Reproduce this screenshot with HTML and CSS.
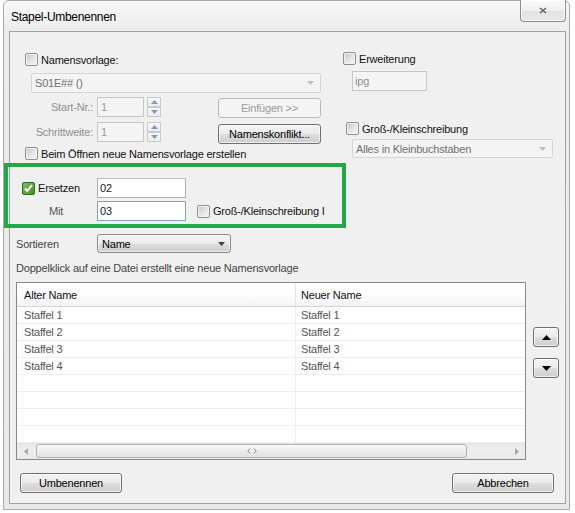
FILE: index.html
```html
<!DOCTYPE html>
<html lang="de">
<head>
<meta charset="utf-8">
<title>Stapel-Umbenennen</title>
<link rel="stylesheet" href="styles.css">
</head>
<body>
<div class="window">
  <div class="titlebar">
    <span class="title">Stapel-Umbenennen</span>
    <div class="close"><svg width="8" height="7" viewBox="0 0 8 7"><path d="M1 1l6 5M7 1L1 6" stroke="#5d5d5d" stroke-width="1.4" fill="none"/></svg></div>
  </div>
  <div class="client">
    <div class="top">
      <div class="left">
        <div class="chk"><span class="box"></span><span>Namensvorlage:</span></div>
        <div class="combo dis nv-combo"><span>S01E## ()</span><svg class="arr" width="7" height="4" viewBox="0 0 7 4"><path d="M0 0h7L3.5 4z" fill="#bdbdbd"/></svg></div>
        <div class="mid">
          <div class="fields">
            <div class="frow">
              <span class="flabel">Start-Nr.:</span>
              <div class="num">1</div>
              <div class="spin"><span><svg width="7" height="4" viewBox="0 0 7 4"><path d="M0 4h7L3.5 0z" fill="#7f97c9"/></svg></span><span><svg width="7" height="4" viewBox="0 0 7 4"><path d="M0 0h7L3.5 4z" fill="#7f97c9"/></svg></span></div>
            </div>
            <div class="frow">
              <span class="flabel">Schrittweite:</span>
              <div class="num">1</div>
              <div class="spin"><span><svg width="7" height="4" viewBox="0 0 7 4"><path d="M0 4h7L3.5 0z" fill="#7f97c9"/></svg></span><span><svg width="7" height="4" viewBox="0 0 7 4"><path d="M0 0h7L3.5 4z" fill="#7f97c9"/></svg></span></div>
            </div>
          </div>
          <div class="btns">
            <div class="btn dis">Einfügen &gt;&gt;</div>
            <div class="btn">Namenskonflikt...</div>
          </div>
        </div>
        <div class="chk open-cb"><span class="box"></span><span>Beim Öffnen neue Namensvorlage erstellen</span></div>
      </div>
      <div class="right">
        <div class="chk ext"><span class="box"></span><span>Erweiterung</span></div>
        <div class="ipg">ipg</div>
        <div class="chk case-cb"><span class="box"></span><span>Groß-/Kleinschreibung</span></div>
        <div class="combo dis case-combo"><span>Alles in Kleinbuchstaben</span><svg class="arr" width="7" height="4" viewBox="0 0 7 4"><path d="M0 0h7L3.5 4z" fill="#bdbdbd"/></svg></div>
      </div>
    </div>

    <div class="replace">
      <div class="chk rep-cb"><svg class="checked" width="13" height="13" viewBox="0 0 13 13"><defs><linearGradient id="g" x1="0" y1="0" x2="1" y2="1"><stop offset="0" stop-color="#7fc45a"/><stop offset="1" stop-color="#3d8f26"/></linearGradient></defs><rect x="0.5" y="0.5" width="12" height="12" rx="1.5" fill="url(#g)" stroke="#2f6f22"/><path d="M3 6.5l2.3 2.5L10 3.2" stroke="#fff" stroke-width="2" fill="none"/></svg><span>Ersetzen</span></div>
      <div class="txt">02</div>
      <div></div>
      <div class="mit">Mit</div>
      <div class="txt focus">03</div>
      <div class="chk case2"><span class="box"></span><span>Groß-/Kleinschreibung I</span></div>
    </div>

    <div class="sort-row">
      <span class="lbl">Sortieren</span>
      <div class="combo name-combo"><span>Name</span><svg class="arr" width="7" height="4" viewBox="0 0 7 4"><path d="M0 0h7L3.5 4z" fill="#404040"/></svg></div>
    </div>

    <div class="hint">Doppelklick auf eine Datei erstellt eine neue Namensvorlage</div>

    <div class="list-area">
      <div class="list">
        <div class="lhead"><div>Alter Name</div><div>Neuer Name</div></div>
        <div class="lrows">
          <div class="lrow"><div>Staffel 1</div><div>Staffel 1</div></div>
          <div class="lrow"><div>Staffel 2</div><div>Staffel 2</div></div>
          <div class="lrow"><div>Staffel 3</div><div>Staffel 3</div></div>
          <div class="lrow"><div>Staffel 4</div><div>Staffel 4</div></div>
          <div class="lrow"><div></div><div></div></div>
          <div class="lrow"><div></div><div></div></div>
          <div class="lrow"><div></div><div></div></div>
          <div class="lrow"><div></div><div></div></div>
        </div>
        <div class="hscroll">
          <div class="sarrow"><svg width="4" height="7" viewBox="0 0 4 7"><path d="M4 0v7L0 3.5z" fill="#a8a8a8"/></svg></div>
          <div class="thumb"><svg width="10" height="6" viewBox="0 0 10 6"><path d="M3 0.5L0.8 3L3 5.5M7 0.5L9.2 3L7 5.5" stroke="#7a7a7a" stroke-width="0.9" fill="none"/></svg></div>
          <div class="sfill"></div>
          <div class="sarrow"><svg width="4" height="7" viewBox="0 0 4 7"><path d="M0 0v7L4 3.5z" fill="#a8a8a8"/></svg></div>
        </div>
      </div>
      <div class="movers">
        <div class="btn mv up"><svg width="9" height="5" viewBox="0 0 9 5"><path d="M0 5h9L4.5 0z" fill="#000"/></svg></div>
        <div class="btn mv down"><svg width="9" height="5" viewBox="0 0 9 5"><path d="M0 0h9L4.5 5z" fill="#000"/></svg></div>
      </div>
    </div>

    <div class="footer">
      <div class="btn fbtn">Umbenennen</div>
      <div class="btn fbtn">Abbrechen</div>
    </div>
  </div>
</div>
<div class="highlight"></div>
</body>
</html>
```
FILE: styles.css
```css
* { box-sizing: border-box; }
body {
  margin: 0;
  background: #ffffff;
  font-family: "Liberation Sans", Arial, sans-serif;
  font-size: 11px;
  letter-spacing: -0.2px;
  color: #1a1a1a;
}
.window {
  margin-left: 3px;
  width: 567px;
  height: 510px;
  border: 1px solid #a9a9a9;
  border-radius: 6px 6px 0 0;
  background: linear-gradient(#f8f8f8, #ececec 30px, #e9e9e9);
}
.titlebar {
  height: 30px;
  display: flex;
  align-items: flex-start;
}
.title {
  padding: 9px 0 0 7px;
  font-size: 12px;
  line-height: 14px;
  letter-spacing: -0.3px;
  color: #000;
}
.close {
  margin-left: auto;
  margin-right: 3px;
  margin-top: -1px;
  width: 46px;
  height: 22px;
  border: 1px solid #8e8e8e;
  border-top: none;
  border-radius: 0 0 4px 4px;
  background: linear-gradient(#fbfbfb, #efefef 50%, #e2e2e2 51%, #e8e8e8);
  box-shadow: inset 0 0 0 1px rgba(255,255,255,0.7);
  display: flex;
  align-items: center;
  justify-content: center;
}
.client {
  margin: 0 3px 0 5px;
  height: 473px;
  border: 1px solid #a3a3a3;
  background: #f0f0f0;
}
.top { display: flex; height: 128px; }
.left { width: 330px; padding: 21px 0 0 15px; }
.right { padding-top: 20px; }

.chk {
  display: flex;
  align-items: center;
  height: 13px;
  gap: 3px;
  white-space: nowrap;
  color: #111;
}
.box {
  width: 13px;
  height: 13px;
  flex: none;
  border: 1px solid #8e8f8f;
  border-radius: 2px;
  background: linear-gradient(135deg, #c4c4c4 0%, #e6e6e6 55%, #f6f6f6 100%);
  box-shadow: inset 0 0 0 1px #f3f3f3;
}
.checked { flex: none; }

.combo {
  display: flex;
  align-items: center;
  justify-content: space-between;
  border: 1px solid #d5d5d5;
  border-radius: 2px;
  padding: 0 6px 0 3px;
  white-space: nowrap;
}
.combo.dis { background: #f4f4f4; color: #6f6f6f; }
.nv-combo { margin: 7px 0 0 6px; width: 290px; height: 20px; }

.mid { display: flex; margin-top: 4px; }
.frow { display: flex; align-items: center; height: 20px; }
.frow + .frow { margin-top: 5px; }
.flabel {
  width: 68px;
  margin-right: 4px;
  text-align: right;
  color: #8f8f8f;
}
.num {
  width: 47px;
  height: 20px;
  border: 1px solid #c6c6c6;
  background: #f4f4f4;
  color: #9a9a9a;
  padding-left: 3px;
  line-height: 18px;
}
.spin {
  margin-left: 3px;
  width: 14px;
  height: 20px;
  display: flex;
  flex-direction: column;
}
.spin span {
  flex: 1;
  border: 1px solid #cacaca;
  background: linear-gradient(#f8f8f8, #ececec);
  display: flex;
  align-items: center;
  justify-content: center;
}
.btns {
  margin-left: 57px;
  padding-top: 1px;
  display: flex;
  flex-direction: column;
  gap: 6px;
}
.btn {
  width: 103px;
  height: 20px;
  border: 1px solid #707070;
  border-radius: 3px;
  background: linear-gradient(#f3f3f3 0%, #ebebeb 50%, #dddddd 51%, #cfcfcf 100%);
  box-shadow: inset 0 0 0 1px rgba(255,255,255,0.65);
  color: #000;
  display: flex;
  align-items: center;
  justify-content: center;
  white-space: nowrap;
}
.btn.dis {
  border-color: #b9b9b9;
  background: #f4f4f4;
  color: #9b9b9b;
  box-shadow: none;
}
.open-cb { margin-top: 3px; }

.ext { margin-left: 3px; }
.ipg {
  margin: 6px 0 0 12px;
  width: 75px;
  height: 20px;
  border: 1px solid #c6c6c6;
  background: #f4f4f4;
  color: #8d8d8d;
  padding-left: 2px;
  line-height: 18px;
}
.case-cb { margin: 31px 0 0 6px; }
.case-combo { margin: 4px 0 0 12px; width: 201px; height: 19px; }

.replace {
  height: 61px;
  padding-top: 18px;
  display: grid;
  grid-template-columns: 87px 89px auto;
  grid-template-rows: 20px 20px;
  row-gap: 3px;
  align-items: center;
}
.rep-cb { padding-left: 12px; }
.mit { padding-left: 39px; color: #555; }
.txt {
  width: 89px;
  height: 20px;
  border: 1px solid #abadb3;
  border-top-color: #b9bcc2;
  background: #fff;
  padding-left: 2px;
  line-height: 18px;
  color: #222;
}
.txt.focus { border-color: #7da2ce; }
.case2 { margin-left: 11px; }

.sort-row {
  display: flex;
  align-items: center;
  margin-top: 13px;
  height: 19px;
}
.sort-row .lbl { width: 87px; padding-left: 6px; color: #444; }
.name-combo {
  width: 134px;
  height: 19px;
  border-color: #8a8a8a;
  border-radius: 3px;
  background: linear-gradient(#f3f3f3 0%, #ebebeb 50%, #dddddd 51%, #cfcfcf 100%);
  box-shadow: inset 0 0 0 1px rgba(255,255,255,0.6);
  color: #000;
  padding: 0 5px 0 4px;
}
.hint {
  margin-top: 8px;
  padding-left: 6px;
  line-height: 14px;
  color: #444;
}

.list-area { display: flex; margin-top: 7px; }
.list {
  margin-left: 6px;
  width: 510px;
  height: 178px;
  border: 1px solid #828790;
  background: #fff;
  display: flex;
  flex-direction: column;
}
.lhead {
  height: 24px;
  flex: none;
  display: flex;
  align-items: center;
  border-bottom: 1px solid #d5d5d5;
  background: linear-gradient(#ffffff, #ffffff 45%, #f2f3f5);
  color: #111;
}
.lhead div { height: 100%; display: flex; align-items: center; }
.lhead div:first-child { width: 279px; border-right: 1px solid #e3e3e3; padding-left: 7px; }
.lhead div:last-child { padding-left: 5px; }
.lrows { height: 136px; flex: none; overflow: hidden; }
.lrow {
  height: 17px;
  display: flex;
  border-bottom: 1px solid #eeeeee;
  color: #555;
}
.lrow div { display: flex; align-items: center; }
.lrow div:first-child { width: 279px; border-right: 1px solid #eeeeee; padding-left: 7px; }
.lrow div:last-child { padding-left: 5px; }
.hscroll {
  height: 16px;
  flex: none;
  display: flex;
  align-items: center;
  background: linear-gradient(#e4e4e4, #eeeeee 30%, #eaeaea);
}
.sarrow { width: 17px; display: flex; justify-content: center; align-items: center; }
.thumb {
  margin-left: 2px;
  width: 431px;
  height: 14px;
  border: 1px solid #b2b2b2;
  border-radius: 3px;
  background: linear-gradient(#f9f9f9, #ececec 50%, #e2e2e2);
  display: flex;
  align-items: center;
  justify-content: center;
}
.sfill { flex: 1; }
.movers { margin-left: 7px; display: flex; flex-direction: column; }
.mv { width: 26px; height: 20px; }
.mv.up { margin-top: 45px; }
.mv.down { margin-top: 11px; }

.footer {
  margin-top: 13px;
  display: flex;
  justify-content: space-between;
  padding: 0 11px 0 10px;
}
.fbtn { width: 102px; }

.highlight {
  position: absolute;
  left: 4px;
  top: 163px;
  width: 342px;
  height: 65px;
  border: 4px solid #22a84a;
}
```
